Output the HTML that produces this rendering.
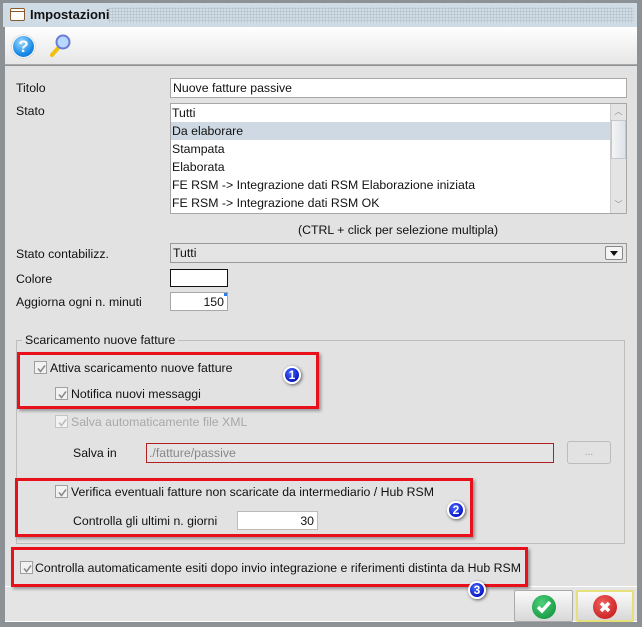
<!DOCTYPE html>
<html><head><meta charset="utf-8"><style>
*{margin:0;padding:0;box-sizing:border-box}
body{width:642px;height:627px;background:#8c9196;font-family:"Liberation Sans",sans-serif;font-size:12.3px;color:#111;position:relative;overflow:hidden}
.a{position:absolute}
.lbl{position:absolute;font-size:12.3px;line-height:14px}
.inp{position:absolute;background:#fff;border:1px solid #a8a8a8;font-size:12.3px;line-height:18px;padding-left:2px}
.cb{position:absolute;width:13px;height:13px;border:1px solid #a0a0a0;background:#f2f2f2}
.cb svg{position:absolute;left:1px;top:1px}
.red{position:absolute;border:3px solid #e8101a;box-shadow:2px 2px 3px rgba(0,0,0,.35)}
.badge{position:absolute;width:18px;height:18px;border-radius:50%;background:radial-gradient(circle at 40% 35%,#4a6cff,#0a17c8 70%);border:2px solid #fff;box-shadow:1px 1px 3px rgba(0,0,0,.6);color:#fff;font-weight:bold;font-size:12px;line-height:14px;text-align:center}
</style></head><body>
<div class="a" style="left:3px;top:3px;width:634px;height:24px;background:#cfdbe5"></div>
<div class="a" style="left:108px;top:7px;width:526px;height:16px;background-image:radial-gradient(#b0bcc6 0.8px,transparent 1px);background-size:3px 3px"></div>
<div class="a" style="left:10px;top:8px;width:15px;height:13px;border:1.5px solid #8a5a2a;background:#fff;border-radius:2px"><div style="height:3px;border-bottom:1px solid #8a5a2a"></div></div>
<div class="lbl" style="left:30px;top:8px;font-weight:bold;font-size:13px">Impostazioni</div>
<div class="a" style="left:5px;top:27px;width:632px;height:38px;background:linear-gradient(#fff,#e6e6e6);border-bottom:1px solid #aaa"></div>
<div class="a" style="left:12px;top:35px;width:23px;height:23px;border-radius:50%;background:radial-gradient(circle at 40% 30%,#9fd8ff,#1a8de8 60%,#0b63c0);border:1px solid #fff;box-shadow:0 0 1px #666;color:#fff;font-weight:bold;font-size:17px;line-height:21px;text-align:center">?</div>
<svg class="a" style="left:48px;top:33px" width="24" height="26"><line x1="4" y1="22" x2="11" y2="14" stroke="#f0c010" stroke-width="4" stroke-linecap="round"/><circle cx="15" cy="9" r="6.5" fill="#b8d8ff" stroke="#6a7ad8" stroke-width="2"/></svg>
<div class="a" style="left:5px;top:66px;width:632px;height:520px;background:#e2e2e2"></div>
<div class="lbl" style="left:16px;top:81px">Titolo</div>
<div class="inp" style="left:170px;top:78px;width:457px;height:20px">Nuove fatture passive</div>
<div class="lbl" style="left:16px;top:104px">Stato</div>
<div class="inp" style="left:170px;top:103px;width:457px;height:111px;padding:0;line-height:18px">
<div style="padding-left:1px">Tutti</div>
<div style="padding-left:1px;background:#cfd9e3;width:439px">Da elaborare</div>
<div style="padding-left:1px">Stampata</div>
<div style="padding-left:1px">Elaborata</div>
<div style="padding-left:1px">FE RSM -&gt; Integrazione dati RSM Elaborazione iniziata</div>
<div style="padding-left:1px">FE RSM -&gt; Integrazione dati RSM OK</div>
<div class="a" style="right:0;top:0;width:16px;height:109px;background:#e4e4e4;border-left:1px solid #ccc">
<div style="height:16px;font-size:8px;color:#888;text-align:center;line-height:16px">︿</div>
<div style="height:39px;background:linear-gradient(90deg,#f4f4f4,#dde3ea);border:1px solid #c4c8cc"></div>
<div class="a" style="bottom:0;height:16px;width:15px;font-size:8px;color:#888;text-align:center;line-height:16px">﹀</div></div>
</div>
<div class="lbl" style="left:298px;top:223px">(CTRL + click per selezione multipla)</div>
<div class="lbl" style="left:16px;top:247px">Stato contabilizz.</div>
<div class="inp" style="left:170px;top:243px;width:457px;height:20px;background:#e4e4e4;border-color:#999">Tutti
<div class="a" style="right:3px;top:2px;width:18px;height:14px;border:1px solid #888;border-radius:2px;background:#f4f4f4"><div style="margin:4px auto 0;width:0;height:0;border-left:4px solid transparent;border-right:4px solid transparent;border-top:5px solid #111"></div></div></div>
<div class="lbl" style="left:16px;top:272px">Colore</div>
<div class="a" style="left:170px;top:269px;width:58px;height:18px;background:#fff;border:1px solid #111"></div>
<div class="lbl" style="left:16px;top:295px">Aggiorna ogni n. minuti</div>
<div class="inp" style="left:170px;top:292px;width:58px;height:19px;text-align:right;padding-right:3px">150<div class="a" style="right:0;top:0;width:3px;height:3px;background:#2a7ae8"></div></div>
<div class="a" style="left:16px;top:340px;width:609px;height:204px;border:1px solid #bdbdbd"></div>
<div class="lbl" style="left:22px;top:333px;background:#e2e2e2;padding:0 3px">Scaricamento nuove fatture</div>
<div class="red" style="left:17px;top:352px;width:302px;height:57px"></div>
<div class="cb" style="left:34px;top:361px"><svg width="11" height="11"><path d="M2 5.5l2.5 3 4.5-6" stroke="#888" stroke-width="1.5" fill="none"/></svg></div>
<div class="lbl" style="left:50px;top:361px">Attiva scaricamento nuove fatture</div>
<div class="cb" style="left:55px;top:387px"><svg width="11" height="11"><path d="M2 5.5l2.5 3 4.5-6" stroke="#888" stroke-width="1.5" fill="none"/></svg></div>
<div class="lbl" style="left:71px;top:387px">Notifica nuovi messaggi</div>
<div class="badge" style="left:283px;top:366px">1</div>
<div class="cb" style="left:55px;top:415px;border-color:#c4c4c4"><svg width="11" height="11"><path d="M2 5.5l2.5 3 4.5-6" stroke="#bbb" stroke-width="1.5" fill="none"/></svg></div>
<div class="lbl" style="left:71px;top:415px;color:#a8a8a8">Salva automaticamente file XML</div>
<div class="lbl" style="left:73px;top:446px">Salva in</div>
<div class="inp" style="left:146px;top:443px;width:408px;height:20px;background:#e4e4e4;border-color:#b02020;color:#888">./fatture/passive</div>
<div class="a" style="left:567px;top:441px;width:44px;height:23px;border:1px solid #bcbcbc;border-radius:3px;color:#999;text-align:center;line-height:22px;font-size:10px">...</div>
<div class="red" style="left:15px;top:478px;width:458px;height:59px"></div>
<div class="cb" style="left:55px;top:485px"><svg width="11" height="11"><path d="M2 5.5l2.5 3 4.5-6" stroke="#888" stroke-width="1.5" fill="none"/></svg></div>
<div class="lbl" style="left:71px;top:485px">Verifica eventuali fatture non scaricate da intermediario / Hub RSM</div>
<div class="lbl" style="left:73px;top:514px">Controlla gli ultimi n. giorni</div>
<div class="inp" style="left:237px;top:511px;width:81px;height:19px;text-align:right;padding-right:3px;border-color:#bbb">30</div>
<div class="badge" style="left:447px;top:501px">2</div>
<div class="a" style="left:5px;top:586px;width:632px;height:36px;background:#e4e4e4;border-top:1px solid #fff;border-bottom:1px solid #fff"></div>
<div class="red" style="left:11px;top:547px;width:517px;height:40px"></div>
<div class="cb" style="left:20px;top:561px"><svg width="11" height="11"><path d="M2 5.5l2.5 3 4.5-6" stroke="#888" stroke-width="1.5" fill="none"/></svg></div>
<div class="lbl" style="left:35px;top:561px">Controlla automaticamente esiti dopo invio integrazione e riferimenti distinta da Hub RSM</div>
<div class="badge" style="left:468px;top:581px">3</div>
<div class="a" style="left:514px;top:590px;width:59px;height:32px;border:1px solid #aaa;border-radius:2px;background:linear-gradient(#fafafa,#d8d8d8)"><div style="margin:4px auto;width:24px;height:24px;border-radius:50%;background:radial-gradient(circle at 40% 35%,#4cd07a,#0a8a36);display:flex;align-items:center;justify-content:center"><svg width="16" height="14"><path d="M2 7l4 4 8-9" stroke="#fff" stroke-width="3.5" fill="none"/></svg></div></div>
<div class="a" style="left:576px;top:590px;width:58px;height:32px;border:2px solid #e6e07a;border-radius:2px;background:linear-gradient(#fafafa,#d8d8d8)"><div style="margin:3px auto;width:24px;height:24px;border-radius:50%;background:radial-gradient(circle at 40% 35%,#f06060,#c01010);display:flex;align-items:center;justify-content:center"><svg width="14" height="14"><path d="M3 3l8 8M11 3l-8 8" stroke="#fff" stroke-width="3.5"/></svg></div></div>
</body></html>
